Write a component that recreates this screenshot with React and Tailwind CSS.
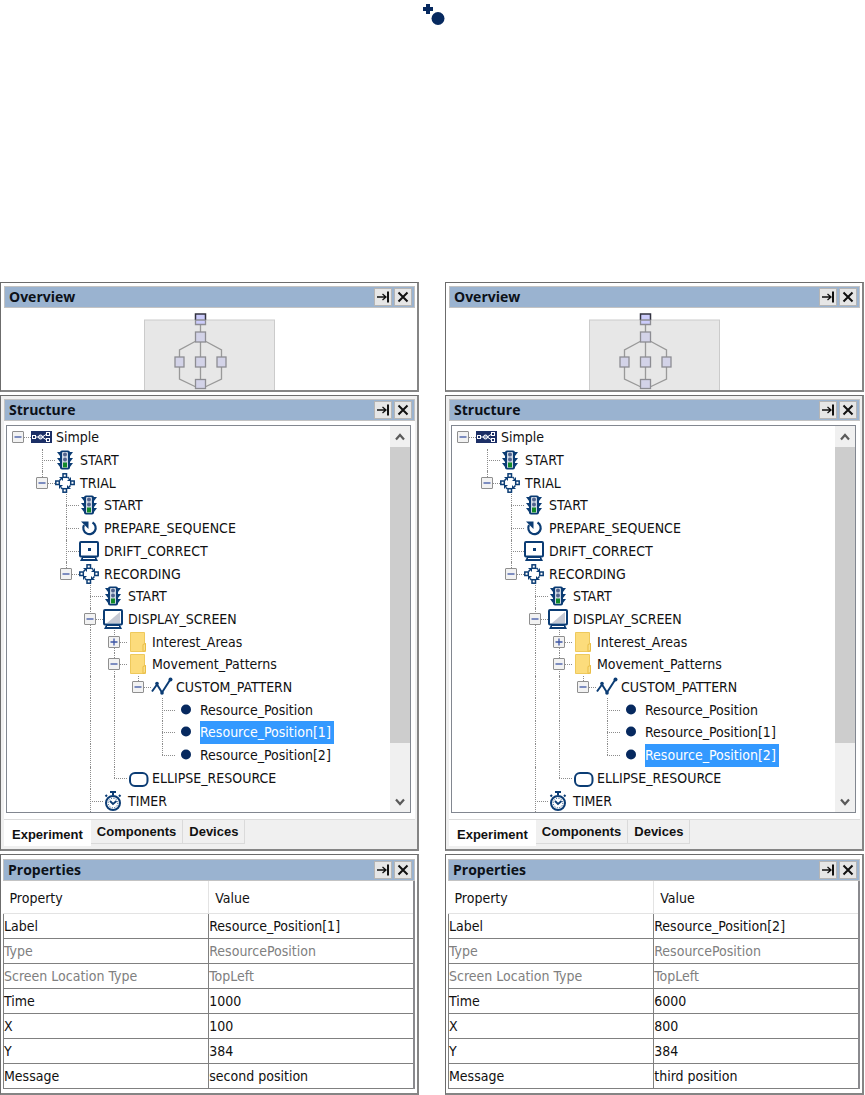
import React, { useState } from 'react';

const NAVY = '#0b3c74';

const ICONS = {
    project: (
        <svg width="21" height="20" viewBox="0 0 21 20">
            <rect x="0" y="4" width="21" height="12" fill="#1c2f66" />
            <path d="M4 10h9M11 10l4-2.500M11 10l4 2.500" stroke="#fff" fill="none" />
            <rect x="1.500" y="8.500" width="3" height="3" fill="#1c2f66" stroke="#fff" />
            <circle cx="9.500" cy="10" r="2" fill="#8e9abb" stroke="#fff" />
            <rect x="15.500" y="5.500" width="3" height="3" fill="#1c2f66" stroke="#fff" />
            <rect x="15.500" y="11.500" width="3" height="3" fill="#1c2f66" stroke="#fff" />
        </svg>
    ),
    start: (
        <svg width="20" height="20" viewBox="0 0 20 20">
            <path d="M2 2h16l-3 4H5zM2 8h16l-3 4H5zM2 13h16l-3 4H5z" fill={NAVY} />
            <rect x="5" y="0.500" width="10" height="19" rx="2" fill={NAVY} />
            <rect x="7" y="2" width="6" height="16" rx="1" fill="#cfd8e4" />
            <circle cx="10" cy="4.500" r="2" fill="#53658f" />
            <circle cx="10" cy="9.500" r="2" fill="#53658f" />
            <rect x="8" y="12.500" width="4" height="5" fill="#128a2a" />
        </svg>
    ),
    sequence: (
        <svg width="20" height="20" viewBox="0 0 20 20" fill="none" stroke={NAVY}>
            <path d="M4.500 7.500L6 6M12.500 4L14 5.500M15.500 12.500L14 14M7.500 16L6 14.500" strokeWidth="1.500" />
            <path d="M4 4h4v4zM16 4v4h-4zM16 16h-4v-4zM4 16v-4h4z" fill={NAVY} stroke="none" />
            <g fill="#fff" strokeWidth="1.500">
                <rect x="8" y="0.800" width="3.500" height="3.500" />
                <rect x="15.700" y="8" width="3.500" height="3.500" />
                <rect x="8" y="15.700" width="3.500" height="3.500" />
                <rect x="0.800" y="8" width="3.500" height="3.500" />
            </g>
        </svg>
    ),
    prepare: (
        <svg width="20" height="20" viewBox="0 0 20 20">
            <path d="M13.500 4.500A6.200 6.200 0 1 1 5 7" fill="none" stroke={NAVY} strokeWidth="2.200" />
            <path d="M2 3.500h7.500V11z" fill={NAVY} />
        </svg>
    ),
    drift: (
        <svg width="20" height="20" viewBox="0 0 20 20">
            <rect x="1" y="1" width="18" height="14.500" rx="1" fill="#fff" stroke={NAVY} strokeWidth="2" />
            <rect x="9" y="7" width="3" height="3" fill={NAVY} />
            <path d="M3 16h14l2 4H1z" fill={NAVY} />
            <path d="M4 17.500h12" stroke="#fff" />
        </svg>
    ),
    display: (
        <svg width="20" height="20" viewBox="0 0 20 20">
            <rect x="1" y="1" width="18" height="14.500" rx="1" fill="#fff" stroke={NAVY} strokeWidth="2" />
            <path d="M17 3v11H4z" fill="#c5c9d4" />
            <path d="M3 16h14l2 4H1z" fill={NAVY} />
            <path d="M4 17.500h12" stroke="#fff" />
        </svg>
    ),
    folder: (
        <svg width="20" height="20" viewBox="0 0 20 20">
            <path d="M3.500 0.500h14v11h1v8h-15z" fill="#fcdc7c" stroke="#eec95c" />
            <path d="M16 12.500l2.500-1v7l-2.500 1z" fill="#fbe08b" stroke="#e9bd45" />
        </svg>
    ),
    pattern: (
        <svg width="22" height="20" viewBox="0 0 22 20">
            <path d="M1 14.500L6 7.500L11 15.500L19 3" fill="none" stroke={NAVY} strokeWidth="2" />
            <circle cx="6" cy="6.500" r="1.800" fill={NAVY} />
            <circle cx="11" cy="16" r="1.800" fill={NAVY} />
            <circle cx="19.500" cy="2.500" r="2" fill={NAVY} />
        </svg>
    ),
    dot: (
        <svg width="20" height="20" viewBox="0 0 20 20">
            <circle cx="11" cy="9.500" r="5" fill="#06295f" />
        </svg>
    ),
    ellipse: (
        <svg width="22" height="20" viewBox="0 0 22 20">
            <rect x="3" y="5" width="17.500" height="13" rx="5" fill="#fff" stroke={NAVY} strokeWidth="2" />
        </svg>
    ),
    timer: (
        <svg width="20" height="20" viewBox="0 0 20 20" fill="none" stroke={NAVY}>
            <path d="M7 1h6M10 1v3M16 4l1.500 1.500M4 4L2.500 5.500" strokeWidth="2" />
            <circle cx="10" cy="12" r="7" fill="#fff" strokeWidth="2" />
            <circle cx="10" cy="12" r="4.800" strokeDasharray="1 1.500" />
            <path d="M7 10l3 3 3.500-3" strokeWidth="1.800" />
        </svg>
    ),
};

// guides: depths whose vertical line passes straight through the row
const nodes = [
    { label: 'Simple', depth: 0, icon: 'project', toggle: 'minus', root: true },
    { label: 'START', depth: 1, icon: 'start' },
    { label: 'TRIAL', depth: 1, icon: 'sequence', toggle: 'minus', last: true },
    { label: 'START', depth: 2, icon: 'start' },
    { label: 'PREPARE_SEQUENCE', depth: 2, icon: 'prepare' },
    { label: 'DRIFT_CORRECT', depth: 2, icon: 'drift' },
    { label: 'RECORDING', depth: 2, icon: 'sequence', toggle: 'minus', last: true },
    { label: 'START', depth: 3, icon: 'start' },
    { label: 'DISPLAY_SCREEN', depth: 3, icon: 'display', toggle: 'minus' },
    { label: 'Interest_Areas', depth: 4, icon: 'folder', toggle: 'plus', guides: [3] },
    { label: 'Movement_Patterns', depth: 4, icon: 'folder', toggle: 'minus', guides: [3] },
    { label: 'CUSTOM_PATTERN', depth: 5, icon: 'pattern', toggle: 'minus', last: true, guides: [3, 4] },
    { label: 'Resource_Position', depth: 6, icon: 'dot', guides: [3, 4] },
    { label: 'Resource_Position[1]', depth: 6, icon: 'dot', guides: [3, 4] },
    { label: 'Resource_Position[2]', depth: 6, icon: 'dot', last: true, guides: [3, 4] },
    { label: 'ELLIPSE_RESOURCE', depth: 4, icon: 'ellipse', last: true, guides: [3] },
    { label: 'TIMER', depth: 3, icon: 'timer' },
];

const tabs = ['Experiment', 'Components', 'Devices'];

const PanelHeader = ({ title }) => (
    <div className="flex h-[22px] items-center border border-[#c3c3c3] bg-[#9ab3d0] pl-1 pr-0.5">
        <h2 className="flex-1 font-['Open_Sans',sans-serif] text-[14px] font-bold leading-5 text-[#0c1118]">{title}</h2>
        <div className="flex gap-0.5">
            <button type="button" aria-label={`Dock ${title}`} className="flex h-[18px] w-[18px] items-center justify-center border border-[#b5b5b5] bg-[#e6e6e6]">
                <svg width="14" height="14" viewBox="0 0 14 14" fill="none" stroke="#111">
                    <path d="M1 7h9M6.500 4l3.500 3-3.500 3" strokeWidth="1.300" />
                    <path d="M12 1.500v11" strokeWidth="2" />
                </svg>
            </button>
            <button type="button" aria-label={`Close ${title}`} className="flex h-[18px] w-[18px] items-center justify-center border border-[#b5b5b5] bg-[#e6e6e6]">
                <svg width="14" height="14" viewBox="0 0 14 14" fill="none" stroke="#111" strokeWidth="2">
                    <path d="M2.500 2.500l9 9M11.500 2.500l-9 9" />
                </svg>
            </button>
        </div>
    </div>
);

const Panel = ({ title, className, children }) => (
    <section className={`border-b-2 border-l border-r-2 border-t border-[#858585] border-l-[#6c6c6c] border-t-[#6c6c6c] ${className}`}>
        <PanelHeader title={title} />
        {children}
    </section>
);

const Overview = () => (
    <Panel title="Overview" className="bg-white pl-[3px] pr-0.5 pt-[3px]">
        <div className="flex justify-center">
            <svg width="132" height="82" viewBox="1 0 132 82">
                <rect x="1.500" y="12" width="130" height="80" fill="#e7e7e7" stroke="#cbcbcb" />
                <g fill="none" stroke="#999" strokeWidth="1.300">
                    <path d="M57.500 16v55M53 33l-16.500 9v29l16.500 8M62 33l16.500 9v29l-16.500 8" />
                </g>
                <g fill="#d3d3e8" stroke="#8d8d93" strokeWidth="1.300">
                    <rect x="52.500" y="24" width="10" height="10" />
                    <rect x="32" y="49" width="9" height="10" />
                    <rect x="52.500" y="49" width="10" height="10" />
                    <rect x="74" y="49" width="9" height="10" />
                    <rect x="52.500" y="71.500" width="10" height="9" />
                </g>
                <rect x="52.500" y="6" width="10" height="10" fill="#ccccfb" />
                <path d="M52.500 12V6h10v6" fill="none" stroke="#333340" strokeWidth="1.500" />
                <path d="M52.500 12v4.500h10V12M52.500 12h10" fill="none" stroke="#8d8d93" strokeWidth="1.300" />
            </svg>
        </div>
    </Panel>
);

const TreeRow = ({ node, selected, onSelect }) => {
    const { label, depth, icon, toggle, root, last, guides = [] } = node;
    return (
        <li className="flex flex-1 items-stretch">
            {Array.from({ length: depth }, (_, i) => (
                <span key={i} className="flex w-6 shrink-0 pl-[11px]">
                    {guides.includes(i) && <span className="border-l border-dotted border-[#8c8c8c]" />}
                </span>
            ))}
            <span className="relative flex w-6 shrink-0 items-center pl-[5px]">
                {!root && <span className={`absolute left-[11px] top-0 border-l border-dotted border-[#8c8c8c] ${last ? 'h-1/2' : 'h-full'}`} />}
                <span className="absolute left-[11px] right-0 top-1/2 border-t border-dotted border-[#8c8c8c]" />
                {toggle && (
                    <button type="button" aria-label={`Toggle ${label}`} className="relative flex h-3 w-3 items-center justify-center rounded-[1px] border border-[#8f8f8f] bg-[#f2f2f2]">
                        <svg width="8" height="8" viewBox="0 0 8 8" stroke="#3d55a5" strokeWidth="1.300">
                            <path d={toggle === 'plus' ? 'M0.500 4h7M4 0.500v7' : 'M0.500 4h7'} />
                        </svg>
                    </button>
                )}
            </span>
            <span className="flex w-[25px] shrink-0 items-center">{ICONS[icon]}</span>
            <button
                type="button"
                onClick={() => onSelect(label)}
                className={`whitespace-nowrap pr-[3px] text-left leading-5 ${selected ? 'bg-[#3399ff] text-white' : ''}`}
            >
                {label}
            </button>
        </li>
    );
};

const ScrollBar = () => (
    <div className="flex w-5 flex-col bg-[#f0f0f0]">
        <button type="button" aria-label="Scroll up" className="flex h-[21px] items-center justify-center">
            <svg width="10" height="8" viewBox="0 0 10 8" fill="none" stroke="#5a5a5a" strokeWidth="2.200">
                <path d="M1 6.500l4-4.500 4 4.500" />
            </svg>
        </button>
        <div className="flex flex-1 flex-col">
            <div className="h-[86%] bg-[#cdcdcd]" />
        </div>
        <button type="button" aria-label="Scroll down" className="flex h-[21px] items-center justify-center">
            <svg width="10" height="8" viewBox="0 0 10 8" fill="none" stroke="#5a5a5a" strokeWidth="2.200">
                <path d="M1 1.500l4 4.500 4-4.500" />
            </svg>
        </button>
    </div>
);

const Structure = ({ selected, onSelect }) => {
    const [tab, setTab] = useState('Experiment');

    return (
        <Panel title="Structure" className="bg-[#f0f0f0] pb-[3px] pl-[3px] pr-0.5 pt-[3px]">
            <div className="border-b border-[#dcdcdc] bg-white pb-[6px] pl-0.5 pr-1 pt-1">
                <div className="flex border border-[#828790]">
                    <ul className="flex min-h-[386px] flex-1 flex-col">
                        {nodes.map((node, i) => (
                            <TreeRow key={i} node={node} selected={node.label === selected} onSelect={onSelect} />
                        ))}
                    </ul>
                    <ScrollBar />
                </div>
            </div>
            <div className="flex items-start font-['Liberation_Sans',sans-serif] text-[13px] font-bold leading-[22px]">
                {tabs.map((name) => (
                    <button
                        key={name}
                        type="button"
                        onClick={() => setTab(name)}
                        className={name === tab
                            ? 'h-[26px] bg-white pl-2 pr-2 pt-[4px]'
                            : 'h-[24px] border-b border-r border-[#dadada] px-[6px] pt-px'}
                    >
                        {name}
                    </button>
                ))}
            </div>
        </Panel>
    );
};

const Properties = ({ rows }) => (
    <Panel title="Properties" className="bg-white pb-1 pl-0.5 pr-0.5 pt-1">
        <table className="w-full table-fixed border-collapse border-r-2 border-[#8a8a8e]">
            <thead>
                <tr className="h-8 text-left">
                    <th className="border-b border-r border-[#e3e3e3] pl-1.5 pt-0.5 font-normal">Property</th>
                    <th className="border-b border-[#e3e3e3] pl-1.5 pt-0.5 font-normal">Value</th>
                </tr>
            </thead>
            <tbody>
                {rows.map(([name, value, disabled]) => (
                    <tr key={name} className={`h-[25px] ${disabled ? 'text-[#808080]' : ''}`}>
                        <td className="border-b border-l border-r border-[#808080] p-0">{name}</td>
                        <td className="border-b border-[#808080] p-0">{value}</td>
                    </tr>
                ))}
            </tbody>
        </table>
    </Panel>
);

const Workspace = ({ initial, time, x, message }) => {
    const [selected, setSelected] = useState(initial);

    const rows = [
        ['Label', initial],
        ['Type', 'ResourcePosition', true],
        ['Screen Location Type', 'TopLeft', true],
        ['Time', time],
        ['X', x],
        ['Y', '384'],
        ['Message', message],
    ];

    return (
        <div className="flex min-w-0 flex-col gap-[3px]">
            <Overview />
            <Structure selected={selected} onSelect={setSelected} />
            <Properties rows={rows} />
        </div>
    );
};

const App = () => {
    return (
        <main className="bg-white font-['DejaVu_Sans_Condensed','DejaVu_Sans',sans-serif] text-[14px] leading-5 text-[#111]">
            <header className="flex h-[282px] justify-center">
                <svg width="24" height="28" viewBox="0 0 24 28" fill="#06295f">
                    <path d="M5 4h4v3h3v4H9v3H5v-3H2V7h3z" />
                    <circle cx="17" cy="18.500" r="6.500" />
                </svg>
            </header>
            <div className="grid grid-cols-2 gap-x-[26px] pr-px">
                <Workspace initial="Resource_Position[1]" time="1000" x="100" message="second position" />
                <Workspace initial="Resource_Position[2]" time="6000" x="800" message="third position" />
            </div>
        </main>
    );
};

export default App;
